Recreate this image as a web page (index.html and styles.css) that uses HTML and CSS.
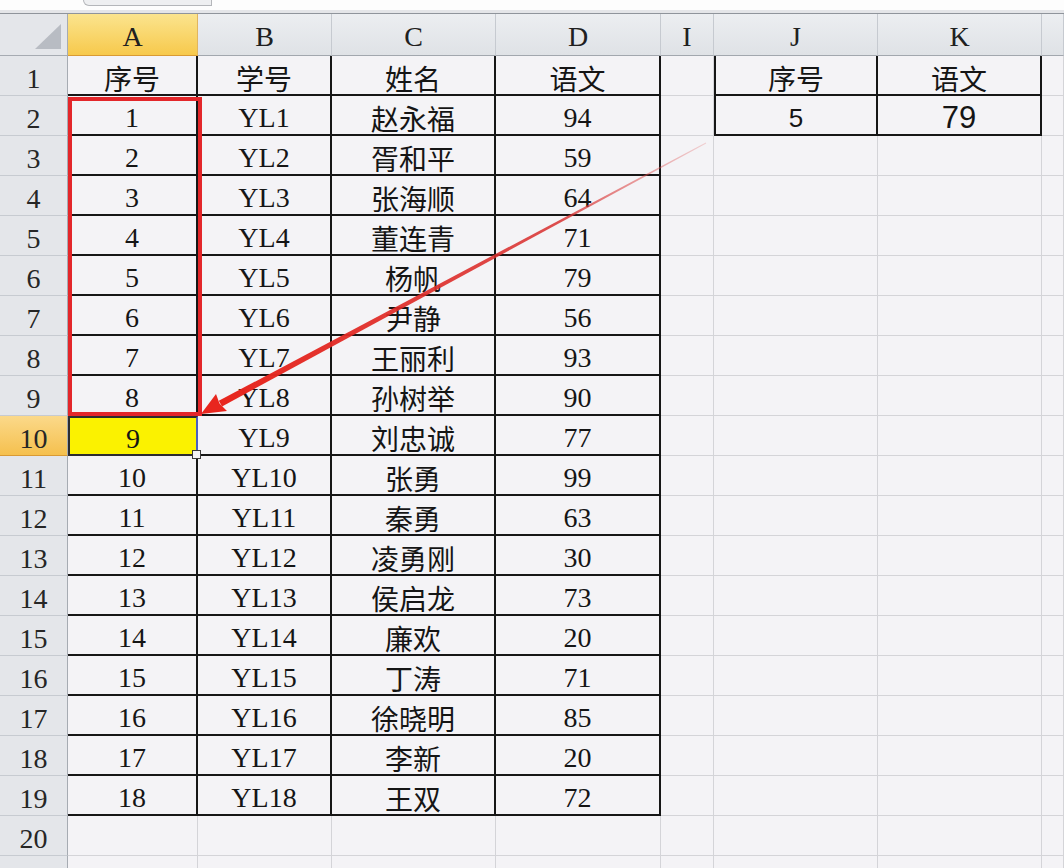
FILE: index.html
```html
<!DOCTYPE html>
<html lang="zh-CN">
<head>
<meta charset="utf-8">
<title>Sheet</title>
<link rel="stylesheet" href="styles.css">
</head>
<body>
<div class="page">
  <div class="topstrip"><div class="tab"></div></div>
  <div class="sheet">
    <div class="corner"><svg width="68" height="42" viewBox="0 0 68 42"><polygon points="61,10 61,35 35,35" fill="#b8bcc3"/></svg></div>
    <div class="ch hl">A</div><div class="ch">B</div><div class="ch">C</div><div class="ch">D</div><div class="ch">I</div><div class="ch">J</div><div class="ch">K</div><div class="ch"></div>

    <div class="rh">1</div><div class="c t">序号</div><div class="c t">学号</div><div class="c t">姓名</div><div class="c t">语文</div><div class="c"></div><div class="c t tl">序号</div><div class="c t">语文</div><div class="c"></div>
    <div class="rh">2</div><div class="c t">1</div><div class="c t">YL1</div><div class="c t">赵永福</div><div class="c t">94</div><div class="c"></div><div class="c t tl sans">5</div><div class="c t sans big">79</div><div class="c"></div>
    <div class="rh">3</div><div class="c t">2</div><div class="c t">YL2</div><div class="c t">胥和平</div><div class="c t">59</div><div class="c"></div><div class="c"></div><div class="c"></div><div class="c"></div>
    <div class="rh">4</div><div class="c t">3</div><div class="c t">YL3</div><div class="c t">张海顺</div><div class="c t">64</div><div class="c"></div><div class="c"></div><div class="c"></div><div class="c"></div>
    <div class="rh">5</div><div class="c t">4</div><div class="c t">YL4</div><div class="c t">董连青</div><div class="c t">71</div><div class="c"></div><div class="c"></div><div class="c"></div><div class="c"></div>
    <div class="rh">6</div><div class="c t">5</div><div class="c t">YL5</div><div class="c t">杨帆</div><div class="c t">79</div><div class="c"></div><div class="c"></div><div class="c"></div><div class="c"></div>
    <div class="rh">7</div><div class="c t">6</div><div class="c t">YL6</div><div class="c t">尹静</div><div class="c t">56</div><div class="c"></div><div class="c"></div><div class="c"></div><div class="c"></div>
    <div class="rh">8</div><div class="c t">7</div><div class="c t">YL7</div><div class="c t">王丽利</div><div class="c t">93</div><div class="c"></div><div class="c"></div><div class="c"></div><div class="c"></div>
    <div class="rh">9</div><div class="c t">8</div><div class="c t">YL8</div><div class="c t">孙树举</div><div class="c t">90</div><div class="c"></div><div class="c"></div><div class="c"></div><div class="c"></div>
    <div class="rh hl">10</div><div class="c t sel">9</div><div class="c t">YL9</div><div class="c t">刘忠诚</div><div class="c t">77</div><div class="c"></div><div class="c"></div><div class="c"></div><div class="c"></div>
    <div class="rh">11</div><div class="c t">10</div><div class="c t">YL10</div><div class="c t">张勇</div><div class="c t">99</div><div class="c"></div><div class="c"></div><div class="c"></div><div class="c"></div>
    <div class="rh">12</div><div class="c t">11</div><div class="c t">YL11</div><div class="c t">秦勇</div><div class="c t">63</div><div class="c"></div><div class="c"></div><div class="c"></div><div class="c"></div>
    <div class="rh">13</div><div class="c t">12</div><div class="c t">YL12</div><div class="c t">凌勇刚</div><div class="c t">30</div><div class="c"></div><div class="c"></div><div class="c"></div><div class="c"></div>
    <div class="rh">14</div><div class="c t">13</div><div class="c t">YL13</div><div class="c t">侯启龙</div><div class="c t">73</div><div class="c"></div><div class="c"></div><div class="c"></div><div class="c"></div>
    <div class="rh">15</div><div class="c t">14</div><div class="c t">YL14</div><div class="c t">廉欢</div><div class="c t">20</div><div class="c"></div><div class="c"></div><div class="c"></div><div class="c"></div>
    <div class="rh">16</div><div class="c t">15</div><div class="c t">YL15</div><div class="c t">丁涛</div><div class="c t">71</div><div class="c"></div><div class="c"></div><div class="c"></div><div class="c"></div>
    <div class="rh">17</div><div class="c t">16</div><div class="c t">YL16</div><div class="c t">徐晓明</div><div class="c t">85</div><div class="c"></div><div class="c"></div><div class="c"></div><div class="c"></div>
    <div class="rh">18</div><div class="c t">17</div><div class="c t">YL17</div><div class="c t">李新</div><div class="c t">20</div><div class="c"></div><div class="c"></div><div class="c"></div><div class="c"></div>
    <div class="rh">19</div><div class="c t">18</div><div class="c t">YL18</div><div class="c t">王双</div><div class="c t">72</div><div class="c"></div><div class="c"></div><div class="c"></div><div class="c"></div>
    <div class="rh">20</div><div class="c"></div><div class="c"></div><div class="c"></div><div class="c"></div><div class="c"></div><div class="c"></div><div class="c"></div><div class="c"></div>
    <div class="rh"></div><div class="c"></div><div class="c"></div><div class="c"></div><div class="c"></div><div class="c"></div><div class="c"></div><div class="c"></div><div class="c"></div>
  </div>
  <div class="redbox"></div>
  <svg class="arrow" width="1064" height="868" viewBox="0 0 1064 868">
    <defs>
      <linearGradient id="lg" x1="706" y1="143" x2="215" y2="405" gradientUnits="userSpaceOnUse">
        <stop offset="0" stop-color="#e06060" stop-opacity="0.25"/>
        <stop offset="0.3" stop-color="#d83030" stop-opacity="0.85"/>
        <stop offset="1" stop-color="#e8261e"/>
      </linearGradient>
    </defs>
    <polygon points="706.2,143.5 705.8,142.5 218.8,400.8 222.0,406.4" fill="url(#lg)"/>
    <polygon points="201,414 216,394 219.5,403.6 227,411" fill="#e8261e"/>
  </svg>
</div>
</body>
</html>
```
FILE: styles.css
```css
* { box-sizing: border-box; }
html, body { margin: 0; padding: 0; overflow: hidden; }
body {
  width: 1064px;
  height: 868px;
  background: #f4f3f6;
  font-family: "Liberation Serif", "Noto Sans CJK SC", serif;
  color: #151515;
}
.page {
  position: relative;
  width: 1064px;
  height: 868px;
  overflow: hidden;
}
.topstrip {
  height: 14px;
  background: linear-gradient(#fdfdfd 0, #fdfdfd 10px, #e4e5e8 10px, #e4e5e8 13px);
  border-bottom: 1px solid #8f949b;
  display: flex;
  align-items: flex-start;
}
.tab {
  margin-left: 83px;
  width: 129px;
  height: 6px;
  background: #eeeff1;
  border: 1px solid #b4b6ba;
  border-top: none;
  border-bottom-left-radius: 9px;
}
.sheet {
  display: grid;
  grid-template-columns: 68px 130px 134px 164px 165px 53px 164px 164px 1fr;
  grid-template-rows: 42px repeat(21, 40px);
}
.corner {
  background: #e4e6ea;
  border-right: 1px solid #a6abb2;
  border-bottom: 1px solid #a6abb2;
}
.corner svg { display: block; }
.ch {
  background: linear-gradient(#eceef1, #dfe2e6);
  border-right: 1px solid #c6cad0;
  border-bottom: 1px solid #a2a7ae;
  display: flex;
  align-items: center;
  justify-content: center;
  font-size: 28px;
  color: #202020;
  padding-top: 5px;
}
.ch.hl {
  background: linear-gradient(#fbe48e, #f7c94c);
  border-right: 1px solid #e0b560;
  border-bottom: 1px solid #d99a34;
}
.rh {
  background: #e4e6ea;
  border-right: 1px solid #a6abb2;
  border-bottom: 1px solid #c7cbd1;
  display: flex;
  align-items: center;
  justify-content: center;
  font-size: 28px;
  color: #262626;
  padding-top: 6px;
}
.rh.hl {
  background: linear-gradient(#fbd98a, #f5c04e);
  border-bottom: 1px solid #d99a34;
}
.c {
  border-right: 1px solid #d4d4d8;
  border-bottom: 1px solid #d4d4d8;
  display: flex;
  align-items: center;
  justify-content: center;
  font-size: 28px;
  padding-top: 6px;
  white-space: nowrap;
}
.c.t {
  border-right: 2px solid #161616;
  border-bottom: 2px solid #161616;
}
.c.tl {
  border-left: 2px solid #161616;
}
.c.sans {
  font-family: "Liberation Sans", "Noto Sans CJK SC", sans-serif;
  font-size: 26px;
}
.c.big { font-size: 31px; }
.c.sel {
  position: relative;
  background: #fbf200;
  border: 2px solid #2c2c30;
  border-right: 2px solid #4a5fc0;
}
.c.sel::after {
  content: "";
  position: absolute;
  right: -5px;
  bottom: -5px;
  width: 7px;
  height: 7px;
  background: #f4f3f6;
  border: 1.5px solid #3a3a3a;
}
.redbox {
  position: absolute;
  left: 68px;
  top: 97px;
  width: 134px;
  height: 319px;
  border: 4px solid #e3262a;
  pointer-events: none;
}
.arrow {
  position: absolute;
  left: 0;
  top: 0;
  pointer-events: none;
}
```
